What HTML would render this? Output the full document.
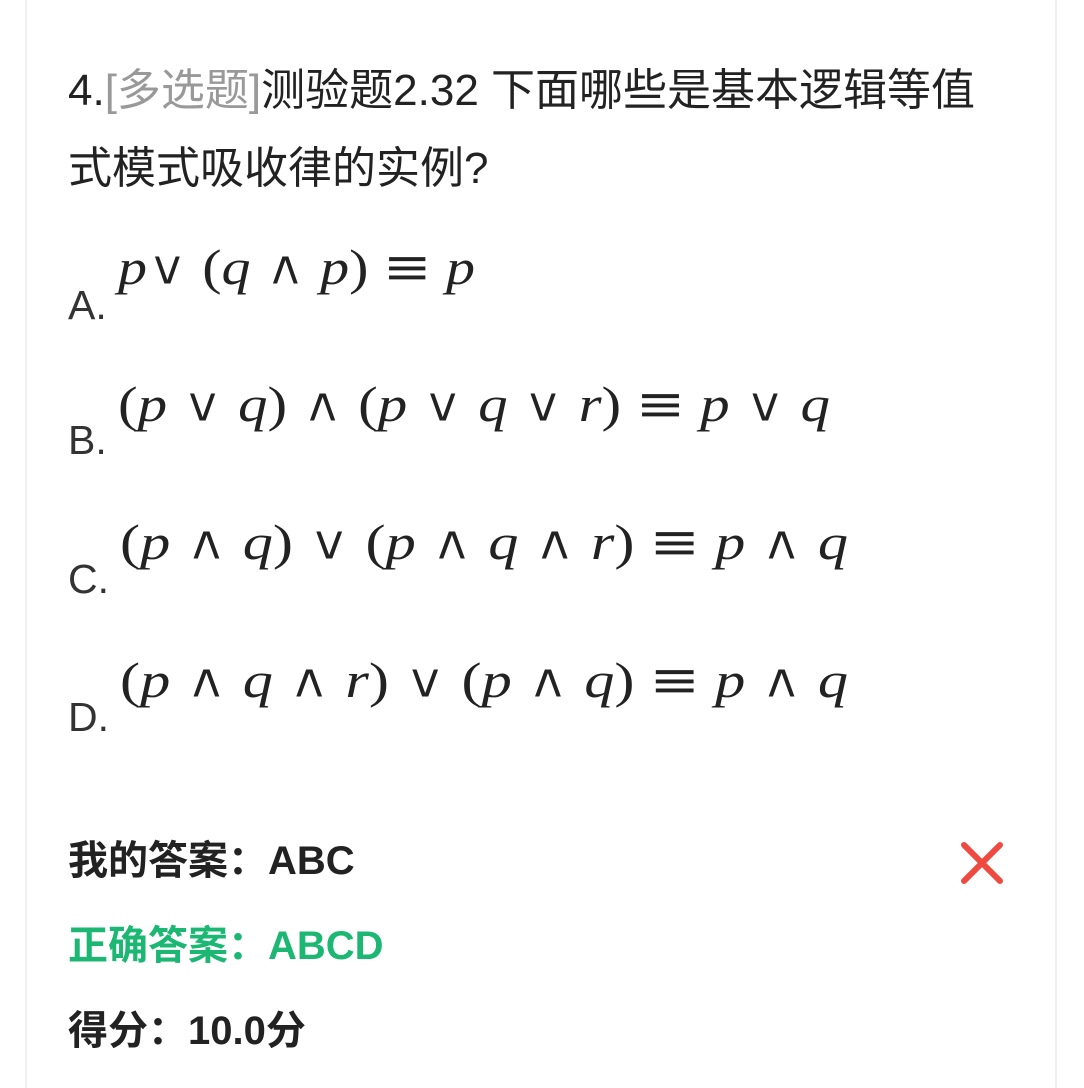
<!DOCTYPE html>
<html><head><meta charset="utf-8"><style>
body{margin:0;width:1084px;height:1077px;background:#fff;position:relative;overflow:hidden;font-family:"Liberation Sans","Noto Sans CJK SC",sans-serif;color:#222}
.card{position:absolute;left:25px;top:-2px;width:1028px;height:1090px;border-left:2px solid #f0f0f0;border-right:2px solid #f0f0f0}
.t{position:absolute;left:68px;font-size:44px;white-space:nowrap;line-height:1}
.g{color:#999}
.lab{position:absolute;left:68px;font-size:41px;color:#333;line-height:1}
svg{position:absolute;left:0;top:0}
.b{position:absolute;left:68px;font-size:40px;font-weight:bold;line-height:1;white-space:nowrap}
.o{font-family:"DejaVu Serif",serif;stroke:#fff;stroke-width:1px;font-size:48px}
.e{font-family:"DejaVu Serif",serif;font-size:50px}
</style></head><body>
<div class="card"></div>
<div class="t" style="top:69px">4.<span class="g">[多选题]</span>测验题2.32 下面哪些是基本逻辑等值</div>
<div class="t" style="top:147px">式模式吸收律的实例?</div>
<div class="lab" style="top:285px">A.</div>
<div class="lab" style="top:420px">B.</div>
<div class="lab" style="top:559px">C.</div>
<div class="lab" style="top:697px">D.</div>
<svg width="1084" height="1077" font-family="Liberation Serif,serif" font-size="50" fill="#222">
<text x="118" y="284" textLength="357" lengthAdjust="spacingAndGlyphs"><tspan font-style="italic">p</tspan><tspan class="o">∨</tspan> (<tspan font-style="italic">q</tspan> <tspan class="o">∧</tspan> <tspan font-style="italic">p</tspan>) <tspan class="e">≡</tspan> <tspan font-style="italic">p</tspan></text>
<text x="118" y="421" textLength="712" lengthAdjust="spacingAndGlyphs">(<tspan font-style="italic">p</tspan> <tspan class="o">∨</tspan> <tspan font-style="italic">q</tspan>) <tspan class="o">∧</tspan> (<tspan font-style="italic">p</tspan> <tspan class="o">∨</tspan> <tspan font-style="italic">q</tspan> <tspan class="o">∨</tspan> <tspan font-style="italic">r</tspan>) <tspan class="e">≡</tspan> <tspan font-style="italic">p</tspan> <tspan class="o">∨</tspan> <tspan font-style="italic">q</tspan></text>
<text x="120" y="559" textLength="728" lengthAdjust="spacingAndGlyphs">(<tspan font-style="italic">p</tspan> <tspan class="o">∧</tspan> <tspan font-style="italic">q</tspan>) <tspan class="o">∨</tspan> (<tspan font-style="italic">p</tspan> <tspan class="o">∧</tspan> <tspan font-style="italic">q</tspan> <tspan class="o">∧</tspan> <tspan font-style="italic">r</tspan>) <tspan class="e">≡</tspan> <tspan font-style="italic">p</tspan> <tspan class="o">∧</tspan> <tspan font-style="italic">q</tspan></text>
<text x="120" y="697" textLength="728" lengthAdjust="spacingAndGlyphs">(<tspan font-style="italic">p</tspan> <tspan class="o">∧</tspan> <tspan font-style="italic">q</tspan> <tspan class="o">∧</tspan> <tspan font-style="italic">r</tspan>) <tspan class="o">∨</tspan> (<tspan font-style="italic">p</tspan> <tspan class="o">∧</tspan> <tspan font-style="italic">q</tspan>) <tspan class="e">≡</tspan> <tspan font-style="italic">p</tspan> <tspan class="o">∧</tspan> <tspan font-style="italic">q</tspan></text>
<path d="M964 845 L1000 881 M1000 845 L964 881" stroke="#ee4a40" stroke-width="6" stroke-linecap="round"/>
</svg>
<div class="b" style="top:841px;color:#222">我的答案：ABC</div>
<div class="b" style="top:926px;color:#1cb873">正确答案：ABCD</div>
<div class="b" style="top:1011px;color:#222">得分：10.0分</div>
</body></html>
